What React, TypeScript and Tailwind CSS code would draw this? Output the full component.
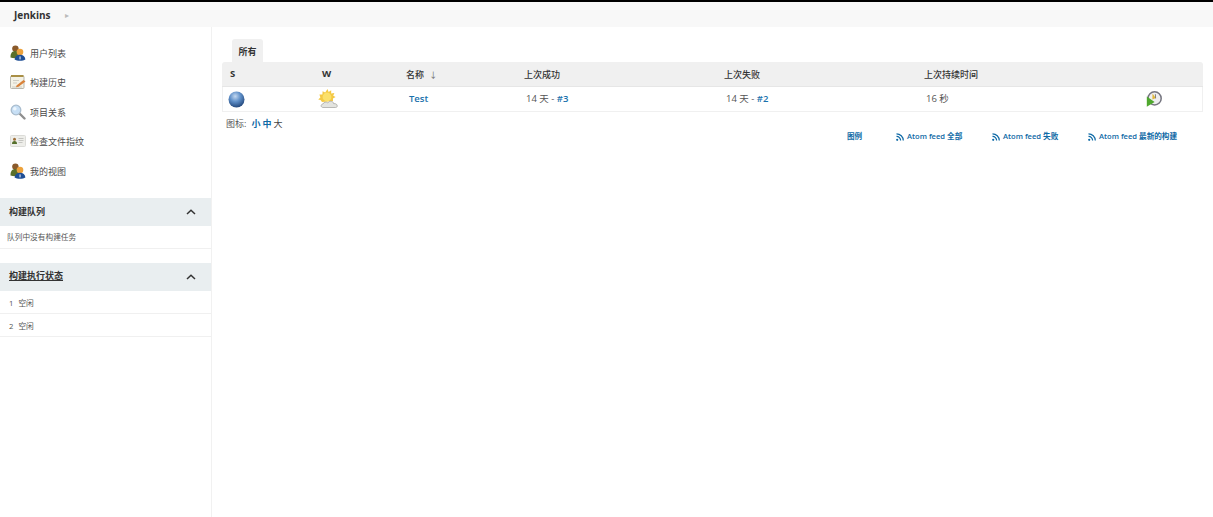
const cjk = '[font-family:"Open_Sans","Noto_Sans_CJK_SC",sans-serif]'

function People() {
    return (
        <svg width="16" height="16" viewBox="0 0 16 16" className="shrink-0">
            <circle cx="5.4" cy="3.6" r="3.2" fill="#8a5a2b" />
            <path d="M0.5 12.5 C0.3 8 2.5 6 5.2 6 C8 6 9.5 8 9.5 12.5 C7 13.6 3 13.6 0.5 12.5 Z" fill="#5a6f2a" />
            <circle cx="10" cy="7" r="3.3" fill="#eda23c" />
            <path d="M4.6 14.5 C4.8 11.4 7 9.8 10 9.8 C13 9.8 15.2 11.4 15.4 14.5 C13 16.2 7 16.2 4.6 14.5 Z" fill="#1f4f96" />
            <rect x="9.5" y="11.4" width="1.1" height="3" fill="#dfe8f5" />
        </svg>
    )
}

function Notepad() {
    return (
        <svg width="16" height="16" viewBox="0 0 16 16" className="shrink-0">
            <rect x="0.5" y="2" width="13.5" height="12.5" rx="1" fill="#f4f2e6" stroke="#b9b7ad" />
            <rect x="1" y="1" width="12.5" height="2" fill="#a98f45" />
            <path d="M3 6.5h6M3 9h4M2 13h10" stroke="#cfcdc3" />
            <path d="M6.5 11.5 L13.5 6 L15.5 7.5 L8.5 12.8 L6 13.2 Z" fill="#d9823a" />
        </svg>
    )
}

function Magnifier() {
    return (
        <svg width="16" height="16" viewBox="0 0 16 16" className="shrink-0">
            <path d="M9.5 9.5 L14.5 14.5" stroke="#8f8f8f" strokeWidth="2.4" strokeLinecap="round" />
            <circle cx="6" cy="6" r="4.8" fill="#c7dff5" stroke="#a9bccd" strokeWidth="1.3" />
            <circle cx="4.8" cy="4.8" r="1.8" fill="#edf6fd" />
        </svg>
    )
}

function IdCard() {
    return (
        <svg width="16" height="16" viewBox="0 0 16 16" className="shrink-0">
            <rect x="0.5" y="2.5" width="15" height="11" rx="1" fill="#eeeeea" stroke="#dcdcd8" />
            <circle cx="4.5" cy="6.2" r="1.5" fill="#a0703a" />
            <path d="M2 11 C2 8.8 3 8 4.5 8 C6 8 7 8.8 7 11 Z" fill="#56702c" />
            <path d="M8.5 5.5h5M8.5 7.5h5M8.5 9.5h4" stroke="#c6c6c2" />
        </svg>
    )
}

function Ball() {
    return (
        <svg width="17" height="17" viewBox="0 0 17 17">
            <defs>
                <radialGradient id="ball" cx="0.42" cy="0.3" r="0.75">
                    <stop offset="0" stopColor="#c3d8f0" />
                    <stop offset="0.45" stopColor="#5f8fc8" />
                    <stop offset="1" stopColor="#1c3f73" />
                </radialGradient>
            </defs>
            <circle cx="8.5" cy="8.5" r="8" fill="url(#ball)" />
        </svg>
    )
}

function Weather() {
    return (
        <svg width="20" height="20" viewBox="0 0 20 20">
            <path d="M9.5 0 L10.6 3 L13.2 1.2 L13.2 4.4 L16.4 4 L15.2 6.8 L17.6 8 L15 9.5 L15 12 L4 13 L2.5 11 L0.2 10.5 L2.4 8.4 L1.4 5.6 L4.4 5.4 L4.6 2.2 L7.2 3.4 Z" fill="#f4c945" />
            <circle cx="9" cy="8" r="4.4" fill="#fbe06a" />
            <path d="M5 18.5 C2.6 18.5 2.4 15.2 5 15 C5.6 13 8.4 12.4 9.8 14 C11 11.4 15.2 11.6 15.6 14.6 C18 14.4 19.4 15.6 19.2 17 C19.2 18 18.4 18.5 17.6 18.5 Z" fill="#e3e4e0" stroke="#a9aaa6" strokeWidth="0.8" />
        </svg>
    )
}

function BuildNow() {
    return (
        <svg width="16" height="16" viewBox="0 0 16 16">
            <circle cx="8.6" cy="7.4" r="6.6" fill="#eeeef0" stroke="#75757f" strokeWidth="1.5" />
            <path d="M6.5 2.4 L9.8 7 L6.4 8.4 Z" fill="#e0b83c" />
            <path d="M9.6 7.4 L9.4 3.2" stroke="#666" strokeWidth="0.8" />
            <path d="M0.8 5.5 L8.6 11 L0.8 15.8 Z" fill="#4fa82e" />
        </svg>
    )
}

function Rss() {
    return (
        <svg width="8" height="8" viewBox="0 0 8 8" className="shrink-0">
            <circle cx="1.2" cy="6.8" r="1.1" fill="#0f6aa6" />
            <path d="M0.5 3.4 A4 4 0 0 1 4.6 7.5" fill="none" stroke="#0f6aa6" strokeWidth="1.2" />
            <path d="M0.5 0.8 A6.8 6.8 0 0 1 7.3 7.5" fill="none" stroke="#0f6aa6" strokeWidth="1.2" />
        </svg>
    )
}

function Chevron() {
    return (
        <svg width="10" height="6" viewBox="0 0 10 6">
            <path d="M1 5 L5 1.2 L9 5" fill="none" stroke="#333" strokeWidth="1.5" />
        </svg>
    )
}

const tasks = [
    { icon: <People />, label: '用户列表' },
    { icon: <Notepad />, label: '构建历史' },
    { icon: <Magnifier />, label: '项目关系' },
    { icon: <IdCard />, label: '检查文件指纹' },
    { icon: <People />, label: '我的视图' },
]

function Sidebar() {
    return (
        <aside className="w-[212px] shrink-0 border-r border-[#f1f1f1] min-h-[490px]">
            <div className="pt-[11px] pl-[10px] flex flex-col">
                {tasks.map((t) => (
                    <div key={t.label} className="h-[29.5px] flex items-center gap-[4px] text-[#4a4a4a] text-[9px]">
                        {t.icon}
                        <span className="pt-[1px]">{t.label}</span>
                    </div>
                ))}
            </div>

            <div className="mt-[12px] h-[28px] bg-[#e9eef0] flex items-center justify-between pl-[9px] pr-[15px]">
                <span className="text-[9px] font-bold text-[#333]">构建队列</span>
                <Chevron />
            </div>
            <div className="h-[23px] border-b border-[#f0f0f0] flex items-center pl-[7px] pt-[3px] text-[7.7px] text-[#555]">
                队列中没有构建任务
            </div>

            <div className="mt-[14px] h-[28px] bg-[#e9eef0] flex items-center justify-between pl-[9px] pr-[15px]">
                <span className="pb-[1px] text-[9px] font-bold text-[#333] underline">构建执行状态</span>
                <Chevron />
            </div>
            {['1', '2'].map((n) => (
                <div key={n} className="h-[23px] border-b border-[#f0f0f0] flex items-center gap-[5px] pl-[9px] pt-[4px] text-[7.7px] text-[#555]">
                    <span>{n}</span>
                    <span>空闲</span>
                </div>
            ))}
        </aside>
    )
}

const headCell = 'px-0 pt-[1px] text-left align-middle text-[#333] border-b border-[#e6e6e6]'

function JobTable() {
    return (
        <table className="w-[981px] table-fixed border-separate border-spacing-0">
            <thead>
                <tr className="h-[25px] bg-[#f0f0f0]">
                    <th className={`${headCell} w-[100px] pl-[8px] rounded-tl-[3px] font-bold text-[9.5px]`}>S</th>
                    <th className={`${headCell} w-[76px] font-bold text-[9.5px]`}>W</th>
                    <th className={`${headCell} w-[118px] pl-[8px] font-medium text-[9px]`}>名称 <span className="font-normal ml-[3px] text-[8px] text-[#666]">↓</span></th>
                    <th className={`${headCell} w-[200px] pl-[8px] font-medium text-[9px]`}>上次成功</th>
                    <th className={`${headCell} w-[200px] pl-[8px] font-medium text-[9px]`}>上次失败</th>
                    <th className={`${headCell} w-[200px] pl-[8px] font-medium text-[9px]`}>上次持续时间</th>
                    <th className={`${headCell} rounded-tr-[3px]`}></th>
                </tr>
            </thead>
            <tbody className="text-[9.5px] text-[#555]">
                <tr className="h-[25px]">
                    <td className="pl-[5px] border-b border-l border-[#f0f0f0]"><div className="flex"><Ball /></div></td>
                    <td className="border-b border-[#f0f0f0]"><div className="flex -ml-[4px]"><Weather /></div></td>
                    <td className="pl-[11px] border-b border-[#f0f0f0] font-semibold text-[#1a72ad]">Test</td>
                    <td className="pl-[10px] border-b border-[#f0f0f0]">14 天 - <span className="font-semibold text-[#1a72ad]">#3</span></td>
                    <td className="pl-[10px] border-b border-[#f0f0f0]">14 天 - <span className="font-semibold text-[#1a72ad]">#2</span></td>
                    <td className="pl-[10px] border-b border-[#f0f0f0]">16 秒</td>
                    <td className="pl-[30px] border-b border-r border-[#f0f0f0]"><div className="flex"><BuildNow /></div></td>
                </tr>
            </tbody>
        </table>
    )
}

function FeedLink({ label }: { label: string }) {
    return (
        <span className="flex items-center gap-[3px] font-semibold">
            <Rss />
            <span>{label}</span>
        </span>
    )
}

export default function App() {
    return (
        <div className={`w-[1213px] h-[517px] overflow-hidden bg-white ${cjk}`}>
            <header className="h-[27px] border-t-2 border-black bg-[#f8f8f8] flex items-center pl-[14px]">
                <span className="pt-[1px] text-[10px] font-bold text-[#333]">Jenkins</span>
                <span className="ml-[14px] text-[8px] text-[#bbb]">▸</span>
            </header>
            <div className="flex">
                <Sidebar />
                <main className="pl-[10px] pt-[12px]">
                    <div className="ml-[10px] w-[31px] h-[23px] pt-[2px] bg-[#f0f0f0] rounded-t-[3px] flex items-center justify-center text-[9px] font-semibold text-[#333]">
                        所有
                    </div>
                    <JobTable />
                    <div className="mt-[5px] pl-[4px] h-[14px] flex items-center text-[9px] text-[#555]">
                        图标:
                        <span className="ml-[5px] font-semibold text-[#0f6aa6]">小</span>
                        <span className="ml-[2px] font-semibold text-[#0f6aa6]">中</span>
                        <span className="ml-[2px] text-[#444]">大</span>
                    </div>
                    <div className="h-[12px] pl-[625px] flex items-center text-[7.6px] text-[#0f6aa6]">
                        <span className="w-[49px] font-semibold">图例</span>
                        <div className="w-[96px]"><FeedLink label="Atom feed 全部" /></div>
                        <div className="w-[96px]"><FeedLink label="Atom feed 失败" /></div>
                        <FeedLink label="Atom feed 最新的构建" />
                    </div>
                </main>
            </div>
        </div>
    )
}
